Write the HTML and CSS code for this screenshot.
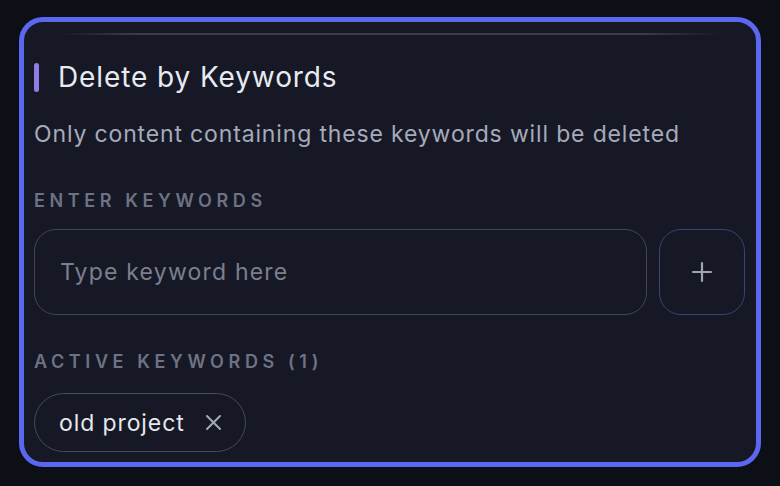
FILE: index.html
```html
<!DOCTYPE html>
<html lang="en">
<head>
    <meta charset="UTF-8">
    <meta name="viewport" content="width=device-width, initial-scale=1.0">
    <title>Delete by Keywords</title>
    <link rel="stylesheet" href="styles.css">
</head>
<body>
    <!-- Keyword filter card -->
    <div class="card">
        <div class="divider"></div>

        <div class="section-title">
            <span class="accent"></span>
            <h2>Delete by Keywords</h2>
        </div>
        <p class="hint">Only content containing these keywords will be deleted</p>

        <div class="label">Enter keywords</div>
        <div class="input-row">
            <input class="keyword-input" type="text" placeholder="Type keyword here">
            <button class="add-button" aria-label="Add keyword">
                <svg width="22" height="22" viewBox="0 0 22 22" fill="none" stroke="currentColor" stroke-width="2.2" stroke-linecap="round">
                    <path d="M11 2v18M2 11h18"/>
                </svg>
            </button>
        </div>

        <div class="label label-active">Active keywords (1)</div>
        <div class="chips">
            <span class="chip">old project
                <svg class="chip-close" width="17" height="17" viewBox="0 0 17 17" fill="none" stroke="currentColor" stroke-width="2" stroke-linecap="round">
                    <path d="M2 2l13 13M15 2L2 15"/>
                </svg>
            </span>
        </div>
    </div>
</body>
</html>
```

FILE: styles.css
```css
/* Base */
* {
    margin: 0;
    padding: 0;
    box-sizing: border-box;
    font-family: Inter, "Noto Sans", sans-serif;
}

body {
    background-color: #0d0f17;
    padding: 17px 19px 0 19px;
}

/* Card */
.card {
    width: 742px;
    height: 450px;
    border: 5px solid #5b67f0;
    border-radius: 24px;
    background-color: #161925;
    padding: 11px 11px 0 10px;
    overflow: hidden;
}

.divider {
    height: 2px;
    margin: 0 25px 0 24px;
    background: linear-gradient(90deg, rgba(59, 62, 74, 0), #3b3e4a 12%, #3b3e4a 88%, rgba(59, 62, 74, 0));
}

.section-title {
    display: flex;
    align-items: center;
    gap: 19px;
    margin-top: 27px;
}

.accent {
    width: 5px;
    height: 29px;
    border-radius: 3px;
    background-color: #8b7ee6;
}

.section-title h2 {
    font-size: 28px;
    font-weight: 400;
    line-height: 30px;
    letter-spacing: 0.9px;
    color: #e8eaf2;
}

.hint {
    margin-top: 27px;
    font-size: 23px;
    line-height: 30px;
    letter-spacing: 0.85px;
    color: #a6aabb;
}

.label {
    margin-top: 42px;
    font-size: 18px;
    font-weight: 600;
    line-height: 20px;
    letter-spacing: 4.6px;
    text-transform: uppercase;
    color: #6e7284;
}

.label-active {
    margin-top: 37px;
}

/* Input row */
.input-row {
    display: flex;
    gap: 12px;
    margin-top: 18px;
}

.keyword-input {
    flex: 1;
    height: 86px;
    border: 1.5px solid #424556;
    border-radius: 22px;
    background-color: transparent;
    padding-left: 25px;
    font-size: 23px;
    letter-spacing: 1.2px;
    color: #e5e7ee;
    outline: none;
}

.keyword-input::placeholder {
    color: #7b7f90;
}

.add-button {
    display: flex;
    align-items: center;
    justify-content: center;
    width: 86px;
    height: 86px;
    border: 1.5px solid #3f4075;
    border-radius: 22px;
    background-color: transparent;
    color: #a0a3b5;
    cursor: pointer;
}

/* Chips */
.chips {
    display: flex;
    gap: 10px;
    margin-top: 21px;
}

.chip {
    display: flex;
    align-items: center;
    gap: 20px;
    height: 59px;
    padding: 0 23px 0 24px;
    border: 1.5px solid #484b5c;
    border-radius: 30px;
    font-size: 23px;
    letter-spacing: 0.9px;
    color: #e5e7ee;
}

.chip-close {
    color: #a5a8b8;
    cursor: pointer;
}
```
